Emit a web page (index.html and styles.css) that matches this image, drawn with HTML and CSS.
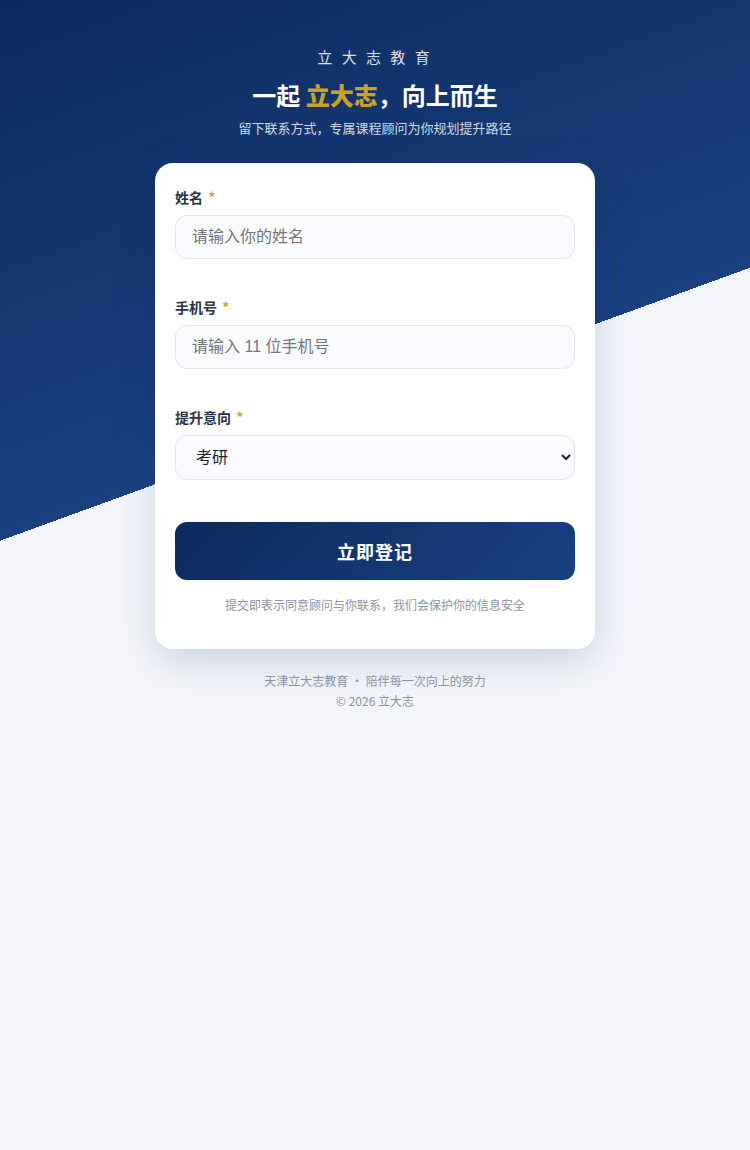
FILE: index.html
```html
<!DOCTYPE html>
<html lang="zh-CN">
<head>
  <meta charset="UTF-8">
  <meta name="viewport" content="width=device-width, initial-scale=1">
  <title>立大志教育</title>
  <link rel="stylesheet" href="styles.css">
</head>
<body>
  <main class="page">
    <header class="hero">
      <p class="brand">立 大 志 教 育</p>
      <h1 class="title">一起 <em class="accent">立大志</em>，向上而生</h1>
      <p class="subtitle">留下联系方式，专属课程顾问为你规划提升路径</p>
    </header>

    <form class="card">
      <div class="field">
        <label class="label" for="name">姓名 <span class="required">*</span></label>
        <input class="control" id="name" type="text" placeholder="请输入你的姓名">
      </div>
      <div class="field">
        <label class="label" for="phone">手机号 <span class="required">*</span></label>
        <input class="control" id="phone" type="tel" placeholder="请输入 11 位手机号">
      </div>
      <div class="field">
        <label class="label" for="intent">提升意向 <span class="required">*</span></label>
        <select class="control" id="intent">
          <option>考研</option>
        </select>
      </div>
      <button class="submit" type="submit">立即登记</button>
      <p class="consent">提交即表示同意顾问与你联系，我们会保护你的信息安全</p>
    </form>

    <footer class="footer">
      <p class="footer-line">天津立大志教育 · 陪伴每一次向上的努力</p>
      <p class="footer-line">© 2026 立大志</p>
    </footer>
  </main>
</body>
</html>
```
FILE: styles.css
```css
* {
  box-sizing: border-box;
  margin: 0;
  padding: 0;
}

body {
  min-height: 100vh;
  background: linear-gradient(160deg, #0d2a5e 0%, #1a4080 38%, #f4f6fb 38%);
  color: #1a1f2e;
  font-family: "Noto Sans CJK SC", sans-serif;
}

.page {
  max-width: 480px;
  margin: 0 auto;
  padding: 45px 20px 40px;
}

.hero {
  margin-bottom: 25px;
  color: #fff;
  text-align: center;
}

.brand {
  margin-bottom: 8px;
  font-size: 15px;
  line-height: 24px;
  letter-spacing: 3px;
  opacity: 0.85;
}

.title {
  font-size: 24px;
  font-weight: 700;
  line-height: 35px;
  margin-bottom: 6px;
}

.accent {
  color: #c9a227;
  font-style: normal;
  font-weight: 900;
}

.subtitle {
  font-size: 13px;
  line-height: 20px;
  opacity: 0.8;
}

.card {
  padding: 24px 20px 33px;
  border-radius: 18px;
  background: #fff;
  box-shadow: 0 12px 40px rgba(13, 42, 94, 0.18);
}

.field {
  margin-bottom: 38px;
}

.label {
  display: block;
  margin-bottom: 8px;
  color: #2a3245;
  font-size: 14px;
  font-weight: 600;
  line-height: 20px;
}

.required {
  margin-left: 2px;
  color: #c9a227;
}

.control {
  display: block;
  width: 100%;
  padding: 12px 16px;
  border: 1px solid #e2e6f0;
  border-radius: 12px;
  background: #fafbff;
  color: #1a1f2e;
  font-family: "Liberation Sans", "Noto Sans CJK SC", sans-serif;
  font-size: 16px;
}

.submit {
  display: block;
  width: 100%;
  margin-top: 42px;
  padding: 16px;
  border: 0;
  border-radius: 12px;
  background: linear-gradient(135deg, #0d2a5e, #1a4080);
  color: #fff;
  font-family: inherit;
  font-size: 18px;
  font-weight: 600;
  letter-spacing: 1px;
}

.consent {
  margin-top: 14px;
  color: #8a93a8;
  font-size: 12px;
  line-height: 22px;
  text-align: center;
}

.footer {
  margin-top: 22px;
  color: #8a93a8;
  font-size: 12px;
  line-height: 20px;
  text-align: center;
}
```
